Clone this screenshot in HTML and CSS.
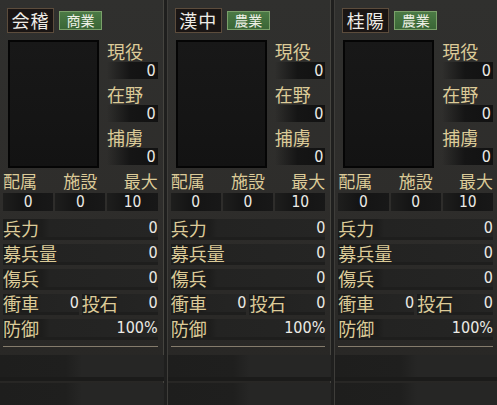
FILE: index.html
```html
<!DOCTYPE html>
<html lang="ja">
<head>
<meta charset="utf-8">
<link rel="stylesheet" href="styles.css">
</head>
<body>
<div class="panels">
  <section class="panel">
    <div class="head"><span class="name">会稽</span><span class="tag">商業</span></div>
    <div class="main">
      <div class="portrait"></div>
      <div class="side">
        <div class="slabel">現役</div><div class="sval">0</div>
        <div class="slabel">在野</div><div class="sval">0</div>
        <div class="slabel">捕虜</div><div class="sval">0</div>
      </div>
    </div>
    <div class="trio">
      <div class="tl">配属</div><div class="tl">施設</div><div class="tl">最大</div>
      <div class="tv">0</div><div class="tv">0</div><div class="tv">10</div>
    </div>
    <div class="rows">
      <div class="row"><span class="rl">兵力</span><span class="rv">0</span></div>
      <div class="row"><span class="rl">募兵量</span><span class="rv">0</span></div>
      <div class="row"><span class="rl">傷兵</span><span class="rv">0</span></div>
      <div class="row split"><div class="half"><span class="rl">衝車</span><span class="rv">0</span></div><div class="half"><span class="rl">投石</span><span class="rv">0</span></div></div>
      <div class="row"><span class="rl">防御</span><span class="rv">100%</span></div>
    </div>
    <div class="rule"></div>
    <div class="empty"><div class="er"></div><div class="er"></div></div>
  </section>
  <section class="panel">
    <div class="head"><span class="name">漢中</span><span class="tag">農業</span></div>
    <div class="main">
      <div class="portrait"></div>
      <div class="side">
        <div class="slabel">現役</div><div class="sval">0</div>
        <div class="slabel">在野</div><div class="sval">0</div>
        <div class="slabel">捕虜</div><div class="sval">0</div>
      </div>
    </div>
    <div class="trio">
      <div class="tl">配属</div><div class="tl">施設</div><div class="tl">最大</div>
      <div class="tv">0</div><div class="tv">0</div><div class="tv">10</div>
    </div>
    <div class="rows">
      <div class="row"><span class="rl">兵力</span><span class="rv">0</span></div>
      <div class="row"><span class="rl">募兵量</span><span class="rv">0</span></div>
      <div class="row"><span class="rl">傷兵</span><span class="rv">0</span></div>
      <div class="row split"><div class="half"><span class="rl">衝車</span><span class="rv">0</span></div><div class="half"><span class="rl">投石</span><span class="rv">0</span></div></div>
      <div class="row"><span class="rl">防御</span><span class="rv">100%</span></div>
    </div>
    <div class="rule"></div>
    <div class="empty"><div class="er"></div><div class="er"></div></div>
  </section>
  <section class="panel">
    <div class="head"><span class="name">桂陽</span><span class="tag">農業</span></div>
    <div class="main">
      <div class="portrait"></div>
      <div class="side">
        <div class="slabel">現役</div><div class="sval">0</div>
        <div class="slabel">在野</div><div class="sval">0</div>
        <div class="slabel">捕虜</div><div class="sval">0</div>
      </div>
    </div>
    <div class="trio">
      <div class="tl">配属</div><div class="tl">施設</div><div class="tl">最大</div>
      <div class="tv">0</div><div class="tv">0</div><div class="tv">10</div>
    </div>
    <div class="rows">
      <div class="row"><span class="rl">兵力</span><span class="rv">0</span></div>
      <div class="row"><span class="rl">募兵量</span><span class="rv">0</span></div>
      <div class="row"><span class="rl">傷兵</span><span class="rv">0</span></div>
      <div class="row split"><div class="half"><span class="rl">衝車</span><span class="rv">0</span></div><div class="half"><span class="rl">投石</span><span class="rv">0</span></div></div>
      <div class="row"><span class="rl">防御</span><span class="rv">100%</span></div>
    </div>
    <div class="rule"></div>
    <div class="empty"><div class="er"></div><div class="er"></div></div>
  </section>
</div>
</body>
</html>
```
FILE: styles.css
```css
html, body {
  margin: 0;
  padding: 0;
  background: #1c1c1b;
  overflow: hidden;
  width: 497px;
  height: 405px;
}
body {
  font-family: "Noto Sans CJK JP", "Noto Sans", sans-serif;
}
.panels {
  display: grid;
  grid-template-columns: repeat(3, 167.67px);
  width: 503px;
  margin-left: -1px;
  height: 405px;
}
.panel {
  box-sizing: border-box;
  height: 405px;
  padding: 8px 6px 0 3px;
  background: linear-gradient(180deg, #30302e 0%, #2e2d2b 50%, #272624 100%);
  border-left: 1px solid #3e3d3a;
  border-right: 3px solid #1f1f1e;
  box-shadow: inset -1px 0 0 #45443f;
  display: flex;
  flex-direction: column;
}
.head {
  display: flex;
  align-items: center;
  gap: 5px;
  height: 25px;
  margin-left: 4px;
}
.name {
  box-sizing: border-box;
  height: 25px;
  width: 47px;
  border: 1px solid #5c4c3c;
  background: #1a1514;
  color: #efece6;
  font-size: 18px;
  line-height: 23px;
  text-align: center;
  letter-spacing: 1px;
}
.tag {
  box-sizing: border-box;
  height: 19px;
  width: 43px;
  border: 1px solid #7aa06a;
  background: linear-gradient(180deg, #4b7a45, #3a6636);
  color: #eef0e6;
  font-size: 14px;
  line-height: 17px;
  text-align: center;
}
.main {
  display: flex;
  margin-top: 7px;
  gap: 8px;
  margin-left: 5px;
}
.portrait {
  box-sizing: border-box;
  width: 91px;
  height: 128px;
  border: 2px solid #050505;
  background: linear-gradient(180deg, #181818, #131313);
}
.side {
  flex: 1;
  display: flex;
  flex-direction: column;
  padding-top: 1px;
}
.slabel {
  color: #dccb98;
  font-size: 18px;
  line-height: 21px;
  height: 21px;
}
.sval {
  height: 17px;
  line-height: 17px;
  margin-bottom: 5px;
  text-align: right;
  color: #ecebe6;
  font-family: "DejaVu Sans Condensed", "DejaVu Sans", sans-serif;
  font-stretch: condensed;
  font-size: 16px;
  padding-right: 2px;
  background: linear-gradient(90deg, rgba(0,0,0,0) 0%, #151515 45%, #121212 100%);
}
.trio {
  display: grid;
  grid-template-columns: 1fr 1fr 1fr;
  column-gap: 2px;
  margin-top: -2px;
}
.tl {
  color: #dccb98;
  font-size: 17px;
  line-height: 25px;
  height: 25px;
  text-align: center;
}
.tl:first-child { text-align: left; }
.tl:nth-child(3) { text-align: right; }
.tv {
  color: #ecebe6;
  font-family: "DejaVu Sans Condensed", "DejaVu Sans", sans-serif;
  font-stretch: condensed;
  font-size: 15.4px;
  line-height: 18px;
  height: 18px;
  text-align: center;
  background: linear-gradient(90deg, #1e1e1d 0%, #141414 40%, #181818 100%);
}
.rows {
  margin-top: 8px;
  display: flex;
  flex-direction: column;
  gap: 7px;
}
.row {
  display: flex;
  justify-content: space-between;
  align-items: center;
  height: 18px;
  background: linear-gradient(90deg, #1c1c1b 0%, #1d1d1c 25%, #232322 30%, #252524 100%);
  box-shadow: 0 3px 0 #1e1e1d;
}
.row.split {
  background: none;
  box-shadow: none;
  gap: 3px;
}
.half {
  flex: 1;
  display: flex;
  justify-content: space-between;
  align-items: center;
  height: 18px;
  background: linear-gradient(90deg, #1c1c1b 0%, #1d1d1c 40%, #232322 50%, #252524 100%);
  box-shadow: 0 3px 0 #1e1e1d;
}
.rl {
  color: #dccb98;
  font-size: 18px;
  line-height: 18px;
}
.rv {
  color: #ecebe6;
  font-family: "DejaVu Sans Condensed", "DejaVu Sans", sans-serif;
  font-stretch: condensed;
  font-size: 16px;
  line-height: 18px;
}
.rule {
  margin-top: 9px;
  height: 1px;
  background: #857c6c;
}
.empty {
  margin-top: 8px;
  display: flex;
  flex-direction: column;
  gap: 6px;
  margin-left: -3px;
  margin-right: -6px;
}
.er {
  height: 22px;
  background: linear-gradient(90deg, #1e1e1d 0%, #1f1f1e 40%, #262625 50%, #262625 100%);
  box-shadow: 0 4px 0 #1b1b1a;
}
```
